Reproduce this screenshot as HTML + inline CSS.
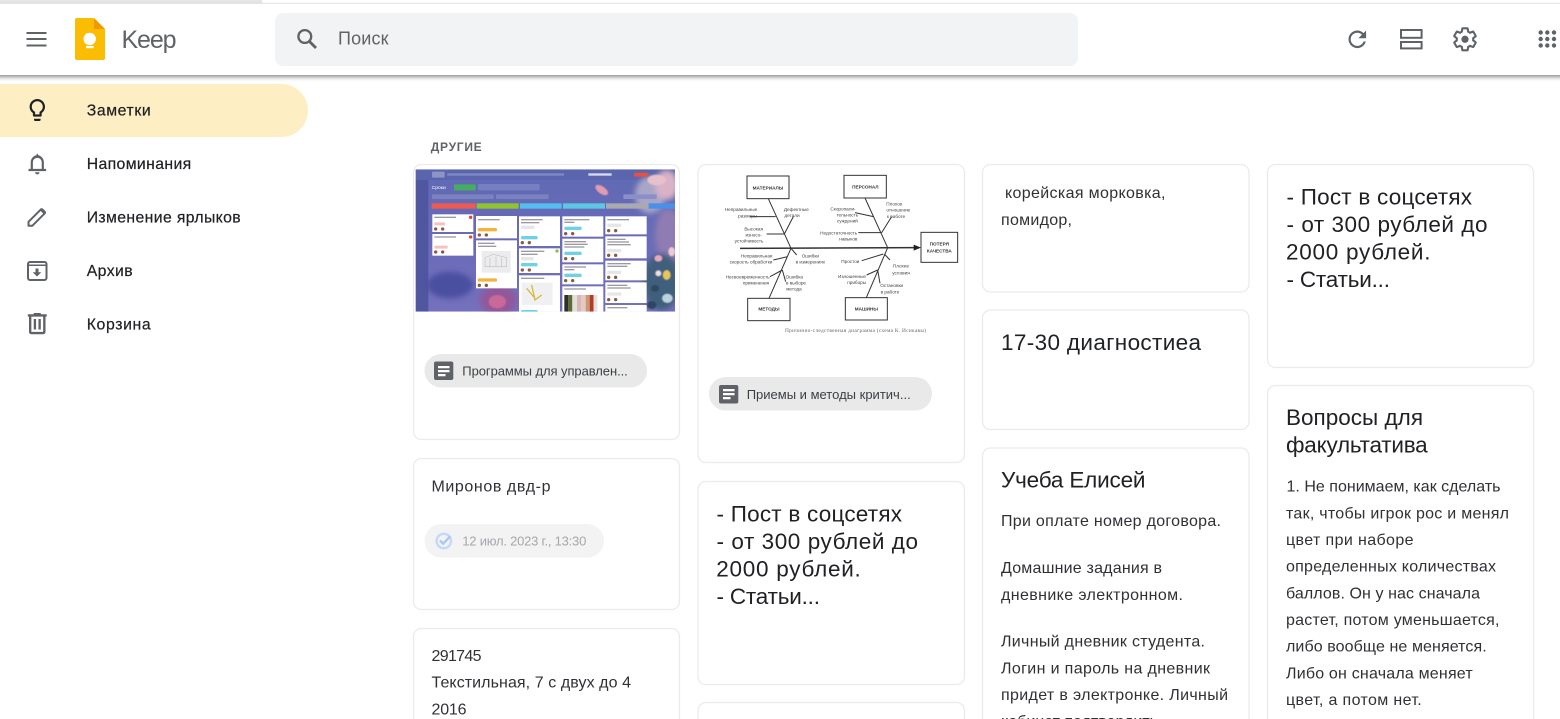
<!DOCTYPE html>
<html lang="ru"><head><meta charset="utf-8"><title>Keep</title>
<style>
html,body{margin:0;padding:0;width:1560px;height:719px;overflow:hidden;background:#fff}
svg{display:block;position:absolute;left:0;top:0;filter:blur(.35px)}
text{font-family:"Liberation Sans","DejaVu Sans",sans-serif;fill:#202124}
.s{font-size:15.8px;stroke:#202124;stroke-width:.2px}
.b{font-size:16px;fill:#303134}
.l{font-size:22.5px}
.c{font-size:13px;fill:#3c4043}
.f text{font-size:14px;fill:#444}
.card{fill:#fff;stroke:#ebebec;stroke-width:1.3}
.ic{fill:#5f6368}
</style></head><body>
<svg width="1560" height="719" viewBox="0 0 1560 719" xmlns="http://www.w3.org/2000/svg">
<defs>
<filter id="sh" x="-5%" y="-20%" width="110%" height="150%"><feDropShadow dx="0" dy="2" stdDeviation="2" flood-color="#000" flood-opacity=".45"/></filter>
<filter id="bl"><feGaussianBlur stdDeviation="1.6"/></filter>
<filter id="bl2"><feGaussianBlur stdDeviation="8"/></filter>
<linearGradient id="kb" x1="0" y1="0" x2="0" y2="1"><stop offset="0" stop-color="#5f6ab4"/><stop offset=".5" stop-color="#6a6bb8"/><stop offset="1" stop-color="#7470bd"/></linearGradient>
<clipPath id="kc"><rect x="17" y="103" width="778" height="427"/></clipPath>
</defs>

<!-- top strip -->
<rect x="0" y="0" width="1560" height="4" fill="#f2f2f2"/>
<rect x="0" y="0" width="262" height="3" fill="#e6e6e6"/>
<rect x="262" y="0" width="1298" height="3" fill="#fff"/>
<!-- sidebar active -->
<path d="M0 84H281.500a26.500 26.500 0 0 1 0 53H0Z" fill="#fdefc3"/>
<!-- header -->
<rect x="-20" y="4" width="1600" height="71" fill="#fff" filter="url(#sh)"/>
<path class="ic" d="M26.500 32h20v2h-20zM26.500 38h20v2h-20zM26.500 44.500h20v2h-20z"/>
<!-- logo -->
<path d="M77 18H94L105 29V58a2 2 0 0 1-2 2H77a2 2 0 0 1-2-2V20a2 2 0 0 1 2-2Z" fill="#fbbc04"/>
<path d="M94 18L105 29H94Z" fill="#f29900"/>
<circle cx="89.700" cy="39" r="6.200" fill="#fff"/>
<rect x="86" y="46" width="7.500" height="2.200" fill="#fff"/>
<text x="121.500" y="48" font-size="25" textLength="55" style="fill:#5f6368">Keep</text>
<!-- search -->
<rect x="275" y="13" width="803" height="53" rx="8" fill="#f1f3f4"/>
<circle cx="304.800" cy="36.500" r="6.400" fill="none" stroke="#5f6368" stroke-width="2.300"/>
<path d="M309.500 41.500L316 48" stroke="#5f6368" stroke-width="2.800" fill="none"/>
<text x="338" y="44.500" font-size="18" textLength="50.500" style="fill:#5f6368">Поиск</text>
<!-- header right -->
<g transform="translate(1344.100 26.100) scale(1.100)"><path class="ic" d="M17.650 6.350C16.200 4.900 14.210 4 12 4c-4.420 0-7.990 3.580-7.990 8s3.570 8 7.990 8c3.730 0 6.840-2.550 7.730-6h-2.080c-.82 2.330-3.040 4-5.650 4-3.310 0-6-2.690-6-6s2.690-6 6-6c1.660 0 3.140.69 4.220 1.780L13 11h7V4l-2.350 2.350z"/></g>
<rect x="1401" y="30" width="20.600" height="7.800" fill="none" stroke="#5f6368" stroke-width="2"/>
<rect x="1401" y="42" width="20.600" height="6.400" fill="none" stroke="#5f6368" stroke-width="2"/>
<g transform="translate(1451.800 26.100) scale(1.100)"><path fill="none" stroke="#5f6368" stroke-width="1.900" d="M19.430 12.980c.04-.32.07-.64.07-.98 0-.34-.03-.66-.07-.98l2.110-1.650c.19-.15.24-.42.12-.64l-2-3.460c-.12-.22-.39-.3-.61-.22l-2.490 1c-.52-.4-1.080-.73-1.690-.98l-.38-2.650C14.460 2.180 14.250 2 14 2h-4c-.25 0-.46.18-.49.42l-.38 2.650c-.61.25-1.170.59-1.690.98l-2.490-1c-.23-.09-.49 0-.61.22l-2 3.460c-.13.22-.07.49.12.64l2.110 1.650c-.04.32-.07.65-.07.98 0 .33.03.66.07.98l-2.110 1.650c-.19.15-.24.42-.12.64l2 3.460c.12.22.39.3.61.22l2.490-1c.52.4 1.080.73 1.690.98l.38 2.650c.03.24.24.42.49.42h4c.25 0 .46-.18.49-.42l.38-2.650c.61-.25 1.170-.59 1.690-.98l2.490 1c.23.09.49 0 .61-.22l2-3.460c.12-.22.07-.49-.12-.64l-2.110-1.650z"/><circle cx="12" cy="12" r="3.300" fill="#5f6368"/></g>
<g fill="#5f6368"><circle cx="1540.700" cy="32.500" r="2.200"/><circle cx="1547.300" cy="32.500" r="2.200"/><circle cx="1554" cy="32.500" r="2.200"/><circle cx="1540.700" cy="39" r="2.200"/><circle cx="1547.300" cy="39" r="2.200"/><circle cx="1554" cy="39" r="2.200"/><circle cx="1540.700" cy="45.500" r="2.200"/><circle cx="1547.300" cy="45.500" r="2.200"/><circle cx="1554" cy="45.500" r="2.200"/></g>

<!-- sidebar -->
<g transform="translate(24.100 96.800) scale(1.100)"><path fill="#202124" d="M9 21c0 .55.45 1 1 1h4c.55 0 1-.45 1-1v-1H9v1zm3-19C8.140 2 5 5.140 5 9c0 2.380 1.190 4.470 3 5.740V17c0 .55.45 1 1 1h6c.55 0 1-.45 1-1v-2.260c1.810-1.270 3-3.360 3-5.740 0-3.860-3.140-7-7-7zm2.850 11.100l-.85.6V16h-4v-2.300l-.85-.6C7.800 12.160 7 10.630 7 9c0-2.760 2.240-5 5-5s5 2.240 5 5c0 1.630-.8 3.160-2.150 4.100z"/></g>
<g transform="translate(24.100 150.200) scale(1.100)"><path class="ic" d="M18 17v-6c0-3.190-2.200-5.860-5.170-6.560C12.700 3.600 12 3 12 3s-.7.6-.83 1.440C8.200 5.140 6 7.810 6 11v6H4v2h16v-2h-2zm-2 0H8v-6c0-2.210 1.790-4 4-4s4 1.790 4 4v6zm-4 5c1.100 0 2-.9 2-2h-4c0 1.100.9 2 2 2z"/></g>
<path d="M28.500 225.700v-3.900L41 209.300l3.900 3.900L32.400 225.700z" fill="none" stroke="#5f6368" stroke-width="2" stroke-linejoin="round"/>
<path d="M40.500 208.800c.8-.8 1.800-.8 2.600 0l2.300 2.300c.8.800.8 1.800 0 2.600l-1 1-4.900-4.900z" fill="#5f6368"/>
<g>
<rect x="28" y="262" width="18.500" height="18" rx="2" fill="none" stroke="#5f6368" stroke-width="2"/>
<path d="M28 265.300h18.500" stroke="#5f6368" stroke-width="1.500"/>
<path d="M35.500 268.500h3v3.700h2.800l-4.300 4.300-4.300-4.300h2.800z" fill="#5f6368"/>
</g>
<g transform="translate(23.100 309.500) scale(1.180)"><path class="ic" d="M15 4V3H9v1H4v2h1v13c0 1.100.9 2 2 2h10c1.100 0 2-.9 2-2V6h1V4h-5zm2 15H7V6h10v13zM9 8h2v9H9zm4 0h2v9h-2z"/></g>
<text class="s" x="86.700" y="115.500" textLength="64">Заметки</text>
<text class="s" x="86.700" y="169" textLength="104.500">Напоминания</text>
<text class="s" x="86.700" y="222.500" textLength="154">Изменение ярлыков</text>
<text class="s" x="86.700" y="276" textLength="46">Архив</text>
<text class="s" x="86.700" y="329.500" textLength="64">Корзина</text>

<text x="430.700" y="151" font-size="12" font-weight="bold" textLength="51" style="fill:#5f6368">ДРУГИЕ</text>

<!-- cards -->
<rect class="card" x="413.500" y="164.500" width="266" height="275" rx="8"/>
<rect class="card" x="413.500" y="458.500" width="266" height="151" rx="8"/>
<rect class="card" x="413.500" y="628.500" width="266" height="110" rx="8"/>
<rect class="card" x="698" y="164.500" width="266.500" height="298" rx="8"/>
<rect class="card" x="698" y="481.500" width="266.500" height="203" rx="8"/>
<rect class="card" x="698" y="702.500" width="266.500" height="60" rx="8"/>
<rect class="card" x="982.500" y="164.500" width="266.500" height="127.500" rx="8"/>
<rect class="card" x="982.500" y="310" width="266.500" height="119.500" rx="8"/>
<rect class="card" x="982.500" y="448" width="266.500" height="320" rx="8"/>
<rect class="card" x="1267.500" y="164.500" width="266" height="203" rx="8"/>
<rect class="card" x="1267.500" y="385.500" width="266" height="380" rx="8"/>

<!-- kanban thumbnail -->
<g transform="translate(410 135) scale(.33333)" clip-path="url(#kc)">
<rect x="17" y="103" width="778" height="427" fill="url(#kb)"/>
<rect x="17" y="103" width="778" height="32" fill="#5a65ae"/>
<rect x="17" y="135" width="38" height="395" fill="#50569f"/>
<g filter="url(#bl2)"><ellipse cx="720" cy="180" rx="45" ry="55" fill="#a8a6c8"/><ellipse cx="770" cy="150" rx="35" ry="45" fill="#d9b2c6"/><ellipse cx="775" cy="300" rx="40" ry="80" fill="#8f7cb2"/><ellipse cx="755" cy="440" rx="55" ry="85" fill="#3f5f7c"/><ellipse cx="265" cy="495" rx="55" ry="45" fill="#93599a"/><ellipse cx="120" cy="450" rx="70" ry="40" fill="#4c50a0"/></g>
<g filter="url(#bl)">
<ellipse cx="770" cy="420" rx="12" ry="15" fill="#e8c45a"/><ellipse cx="745" cy="370" rx="12" ry="10" fill="#e8a7bb"/><ellipse cx="772" cy="490" rx="16" ry="14" fill="#bcd2de"/><ellipse cx="575" cy="165" rx="22" ry="11" fill="#e39bb0" transform="rotate(35 575 165)"/><ellipse cx="740" cy="135" rx="28" ry="16" fill="#e6c0ca"/>
<ellipse cx="262" cy="500" rx="26" ry="20" fill="#c9699a"/><ellipse cx="735" cy="460" rx="12" ry="10" fill="#2f4a5e"/><ellipse cx="785" cy="350" rx="10" ry="14" fill="#f0c8d2"/><ellipse cx="745" cy="415" rx="9" ry="9" fill="#f3dde3"/><ellipse cx="725" cy="510" rx="14" ry="12" fill="#2f4660"/>
</g>
<rect x="66" y="110" width="38" height="18" rx="4" fill="#8d94c8"/><rect x="672" y="113" width="42" height="12" rx="5" fill="#e8503f"/><rect x="112" y="115" width="350" height="7" fill="#8089c4"/><rect x="535" y="115" width="70" height="7" fill="#d8daef"/>
<rect x="132" y="148" width="65" height="18" rx="3" fill="#45ad5f"/><rect x="204" y="147" width="185" height="19" rx="3" fill="#7680c0"/><rect x="66" y="178" width="185" height="14" rx="2" fill="#7a83bf"/><rect x="258" y="178" width="158" height="14" rx="2" fill="#7a83bf"/><rect x="640" y="178" width="100" height="14" rx="2" fill="#8c8fc5"/>
<text x="65" y="162" font-size="15" style="fill:#fff">Сроки</text>
<rect x="65" y="205" width="132" height="16" fill="#ee5a50"/><rect x="200" y="205" width="126" height="16" fill="#90c42c"/><rect x="330" y="205" width="125" height="16" fill="#55bef0"/><rect x="459" y="205" width="126" height="16" fill="#5cc7e2"/><rect x="588" y="205" width="124" height="16" fill="#a9a9b0"/><rect x="716" y="205" width="80" height="16" fill="#4a8fe8"/>
<g fill="#fff">
<rect x="67" y="238" width="123" height="53"/><rect x="67" y="297" width="123" height="65"/>
<rect x="198" y="243" width="123" height="67"/><rect x="198" y="316" width="123" height="144"/>
<rect x="327" y="244" width="123" height="89"/><rect x="327" y="340" width="123" height="74"/><rect x="327" y="421" width="123" height="109"/>
<rect x="457" y="244" width="123" height="61"/><rect x="457" y="311" width="123" height="71"/><rect x="457" y="388" width="123" height="60"/><rect x="457" y="454" width="123" height="76"/>
<rect x="586" y="244" width="124" height="54"/><rect x="586" y="304" width="124" height="66"/><rect x="586" y="377" width="124" height="59"/><rect x="586" y="442" width="124" height="62"/><rect x="586" y="510" width="124" height="20"/>
</g>
<g fill="#9a9aa2">
<rect x="73" y="245" width="65" height="4"/><rect x="73" y="304" width="65" height="4"/><rect x="204" y="252" width="65" height="4"/><rect x="204" y="323" width="50" height="4"/><rect x="204" y="332" width="55" height="4"/><rect x="333" y="252" width="65" height="4"/><rect x="333" y="261" width="55" height="4"/><rect x="333" y="347" width="70" height="4"/><rect x="333" y="356" width="50" height="4"/><rect x="333" y="428" width="70" height="4"/><rect x="463" y="252" width="75" height="4"/><rect x="463" y="260" width="30" height="4"/><rect x="463" y="318" width="65" height="4"/><rect x="463" y="326" width="70" height="4"/><rect x="463" y="334" width="60" height="4"/><rect x="463" y="394" width="65" height="4"/><rect x="463" y="402" width="30" height="4"/><rect x="463" y="460" width="65" height="4"/><rect x="592" y="252" width="65" height="4"/><rect x="592" y="311" width="55" height="4"/><rect x="592" y="319" width="65" height="4"/><rect x="592" y="327" width="70" height="4"/><rect x="592" y="384" width="70" height="4"/><rect x="592" y="392" width="60" height="4"/><rect x="592" y="449" width="60" height="4"/><rect x="592" y="457" width="70" height="4"/><rect x="592" y="516" width="60" height="4"/>
</g>
<g fill="#f6c1c1"><rect x="73" y="262" width="32" height="9" rx="2"/><rect x="73" y="332" width="40" height="9" rx="2"/></g>
<g fill="#f2b43f"><rect x="203" y="279" width="58" height="10" rx="4"/><rect x="203" y="430" width="58" height="10" rx="4"/></g>
<g fill="#6fd1e8"><rect x="333" y="303" width="50" height="10" rx="4"/><rect x="333" y="384" width="50" height="10" rx="4"/><rect x="463" y="275" width="52" height="10" rx="4"/><rect x="463" y="350" width="52" height="10" rx="4"/><rect x="463" y="416" width="52" height="10" rx="4"/><rect x="333" y="525" width="50" height="10" rx="4"/></g>
<g fill="#e6e6e8"><rect x="333" y="272" width="40" height="10" rx="2"/><rect x="333" y="366" width="38" height="10" rx="2"/><rect x="592" y="266" width="42" height="10" rx="2"/><rect x="592" y="342" width="42" height="10" rx="2"/><rect x="592" y="407" width="42" height="10" rx="2"/><rect x="592" y="472" width="42" height="10" rx="2"/></g>
<g fill="#8a5a3c"><circle cx="77" cy="282" r="5"/><circle cx="98" cy="282" r="5"/><circle cx="77" cy="351" r="5"/><circle cx="98" cy="351" r="5"/><circle cx="208" cy="300" r="5"/><circle cx="229" cy="300" r="5"/><circle cx="208" cy="451" r="5"/><circle cx="229" cy="451" r="5"/><circle cx="337" cy="323" r="5"/><circle cx="358" cy="323" r="5"/><circle cx="337" cy="405" r="5"/><circle cx="358" cy="405" r="5"/><circle cx="467" cy="296" r="5"/><circle cx="488" cy="296" r="5"/><circle cx="467" cy="371" r="5"/><circle cx="488" cy="371" r="5"/><circle cx="467" cy="437" r="5"/><circle cx="488" cy="437" r="5"/><circle cx="596" cy="287" r="5"/><circle cx="617" cy="287" r="5"/><circle cx="596" cy="361" r="5"/><circle cx="617" cy="361" r="5"/><circle cx="596" cy="427" r="5"/><circle cx="617" cy="427" r="5"/><circle cx="596" cy="494" r="5"/><circle cx="617" cy="494" r="5"/></g>
<circle cx="182" cy="247" r="5" fill="#e8402f"/><circle cx="182" cy="306" r="5" fill="#e8402f"/><circle cx="441" cy="348" r="5" fill="#8fc42c"/>
<rect x="215" y="348" width="87" height="65" fill="#ececee"/><path d="M225 395V368L250 358L290 368V395ZM240 368V395M258 365V395M275 368V395" stroke="#b5b5ba" fill="none" stroke-width="1.500"/>
<rect x="335" y="443" width="93" height="67" fill="#f0f0f2"/><path d="M350 460l25 30M365 450l10 45 20-15" stroke="#d5b93c" stroke-width="4" fill="none"/>
<rect x="463" y="480" width="12" height="50" fill="#2f2f2a"/><rect x="475" y="480" width="12" height="50" fill="#5d6a3a"/><rect x="487" y="480" width="14" height="50" fill="#e5e0d5"/><rect x="501" y="480" width="13" height="50" fill="#d7b7bb"/><rect x="514" y="480" width="13" height="50" fill="#e8c8c0"/><rect x="527" y="480" width="12" height="50" fill="#c79a72"/><rect x="539" y="480" width="12" height="50" fill="#b5392c"/><rect x="551" y="480" width="11" height="50" fill="#e6e1da"/>
</g>

<!-- fishbone thumbnail -->
<g transform="translate(695 160) scale(.33333)" class="f">
<g fill="#fff" stroke="#333" stroke-width="3"><rect x="156" y="48" width="126" height="68"/><rect x="447" y="46" width="127" height="68"/><rect x="678" y="217" width="110" height="90"/><rect x="158" y="415" width="127" height="67"/><rect x="451" y="413" width="126" height="67"/></g>
<g stroke="#333" stroke-width="3" fill="none"><path d="M220 116L288 265M510 114L578 263M288 265L222 415M578 263L514 413M165 170H242M268 222L295 170M215 222H270M480 158L535 170M560 218L590 170M490 218H560M235 300L278 290M288 265L305 285M225 350L262 330M262 330L272 365M500 302L565 282M568 282L585 300M515 345L548 330M548 330L555 370"/></g>
<path d="M135 265L660 263" stroke="#333" stroke-width="4.500"/><path d="M656 254L678 263L656 272Z" fill="#222"/>
<g text-anchor="middle" font-weight="bold">
<text x="219" y="88" style="font-size:14px;fill:#333;font-weight:bold">МАТЕРИАЛЫ</text>
<text x="511" y="86" style="font-size:14px;fill:#333;font-weight:bold">ПЕРСОНАЛ</text>
<text x="733" y="257" style="font-size:14px;fill:#333;font-weight:bold">ПОТЕРЯ</text>
<text x="733" y="277" style="font-size:14px;fill:#333;font-weight:bold">КАЧЕСТВА</text>
<text x="222" y="452" style="font-size:14px;fill:#333;font-weight:bold">МЕТОДЫ</text>
<text x="514" y="451" style="font-size:14px;fill:#333;font-weight:bold">МАШИНЫ</text>
</g>
<g text-anchor="middle">
<text x="138" y="153">Неправильные</text><text x="158" y="173">размеры</text>
<text x="304" y="153">Дефектные</text><text x="291" y="171">детали</text>
<text x="176" y="212">Высокая</text><text x="176" y="229">износо-</text><text x="162" y="247">устойчивость</text>
<text x="444" y="152">Скоропали-</text><text x="457" y="170">тельность</text><text x="457" y="188">суждений</text>
<text x="598" y="136">Плохое</text><text x="610" y="155">отношение</text><text x="603" y="174">к работе</text>
<text x="431" y="224">Недостаточность</text><text x="460" y="242">навыков</text>
<text x="185" y="293">Неправильная</text><text x="168" y="311">скорость обработки</text>
<text x="346" y="292">Ошибки</text><text x="346" y="311">в измерениях</text>
<text x="158" y="356">Несвоевременность</text><text x="183" y="374">применения</text>
<text x="298" y="355">Ошибка</text><text x="303" y="373">в выборе</text><text x="297" y="391">метода</text>
<text x="466" y="309">Простои</text>
<text x="618" y="323">Плохие</text><text x="618" y="343">условия</text>
<text x="471" y="354">Изношенные</text><text x="485" y="372">приборы</text>
<text x="590" y="381">Остановки</text><text x="585" y="401">в работе</text>
</g>
<text x="270" y="516" textLength="423" style="font-family:'Liberation Serif',serif;font-size:16px;fill:#666">Причинно-следственная диаграмма (схема К. Исикавы)</text>
</g>

<!-- chips -->
<rect x="424.500" y="354" width="222.500" height="33.500" rx="16.700" fill="#e9e9ea"/>
<rect x="434" y="361.500" width="19.300" height="18.500" rx="2" fill="#5f6368"/>
<path d="M438 366h11.500v2.200H438zM438 370h11.500v2.200H438zM438 374h7.500v2.200H438z" fill="#fff"/>
<text class="c" x="462.300" y="375.500" textLength="165.500">Программы для управлен...</text>
<rect x="709" y="377" width="223" height="33.500" rx="16.700" fill="#e9e9ea"/>
<rect x="719" y="385" width="19.300" height="18.500" rx="2" fill="#5f6368"/>
<path d="M723 389h11.500v2.200H723zM723 393h11.500v2.200H723zM723 397h7.500v2.200H723z" fill="#fff"/>
<text class="c" x="746.700" y="399" textLength="164">Приемы и методы критич...</text>
<rect x="424.500" y="524" width="179.500" height="33.500" rx="16.700" fill="#f3f3f4"/>
<circle cx="443.800" cy="541" r="7.200" fill="none" stroke="#c4d9f7" stroke-width="2.400"/>
<path d="M440 540.500l3.200 3.200 7-7.500" fill="none" stroke="#a9c8f5" stroke-width="2.400"/>
<text class="c" x="462.300" y="545.500" textLength="124" style="fill:#a5a7aa">12 июл. 2023 г., 13:30</text>

<!-- col 1 -->
<text class="b" x="431.500" y="491.500" textLength="119">Миронов двд-р</text>
<text class="b" x="431.500" y="661" textLength="50">291745</text>
<text class="b" x="431.500" y="687.700" textLength="199.500">Текстильная, 7 с двух до 4</text>
<text class="b" x="431.500" y="714.300" textLength="35">2016</text>

<!-- col 2 -->
<text class="l" x="716.500" y="521.500" textLength="185.500">- Пост в соцсетях</text>
<text class="l" x="716.500" y="549" textLength="201.500">- от 300 рублей до</text>
<text class="l" x="716.300" y="576.500" textLength="144.500">2000 рублей.</text>
<text class="l" x="716.500" y="604" textLength="103.500">- Статьи...</text>

<!-- col 3 -->
<text class="b" x="1005" y="198" textLength="160.500">корейская морковка,</text>
<text class="b" x="1001" y="225" textLength="71">помидор,</text>
<text class="l" x="1001" y="350" textLength="200">17-30 диагностиеа</text>
<text class="l" x="1001" y="487.500" textLength="144.500">Учеба Елисей</text>
<text class="b" x="1001" y="526" textLength="220">При оплате номер договора.</text>
<text class="b" x="1001" y="573" textLength="161">Домашние задания в</text>
<text class="b" x="1001" y="600" textLength="182">дневнике электронном.</text>
<text class="b" x="1001" y="646.700" textLength="204">Личный дневник студента.</text>
<text class="b" x="1001" y="673.300" textLength="209">Логин и пароль на дневник</text>
<text class="b" x="1001" y="700" textLength="227">придет в электронке. Личный</text>
<text class="b" x="1001" y="726.700" textLength="157">кабинет подтвердить</text>

<!-- col 4 -->
<text class="l" x="1286.500" y="204.500" textLength="185.500">- Пост в соцсетях</text>
<text class="l" x="1286.500" y="232" textLength="201">- от 300 рублей до</text>
<text class="l" x="1286" y="259.500" textLength="144.500">2000 рублей.</text>
<text class="l" x="1286.500" y="287" textLength="103.500">- Статьи...</text>
<text class="l" x="1286" y="425" textLength="137">Вопросы для</text>
<text class="l" x="1286" y="452.700" textLength="141.700">факультатива</text>
<text class="b" x="1286.500" y="491.700" textLength="214">1. Не понимаем, как сделать</text>
<text class="b" x="1286" y="518.300" textLength="223">так, чтобы игрок рос и менял</text>
<text class="b" x="1286" y="545" textLength="127.500">цвет при наборе</text>
<text class="b" x="1286" y="571.700" textLength="210">определенных количествах</text>
<text class="b" x="1286" y="598.300" textLength="194">баллов. Он у нас сначала</text>
<text class="b" x="1286" y="625" textLength="213.500">растет, потом уменьшается,</text>
<text class="b" x="1286" y="651.700" textLength="200.700">либо вообще не меняется.</text>
<text class="b" x="1286" y="678.300" textLength="186.700">Либо он сначала меняет</text>
<text class="b" x="1286" y="705" textLength="135.700">цвет, а потом нет.</text>
</svg>
</body></html>
